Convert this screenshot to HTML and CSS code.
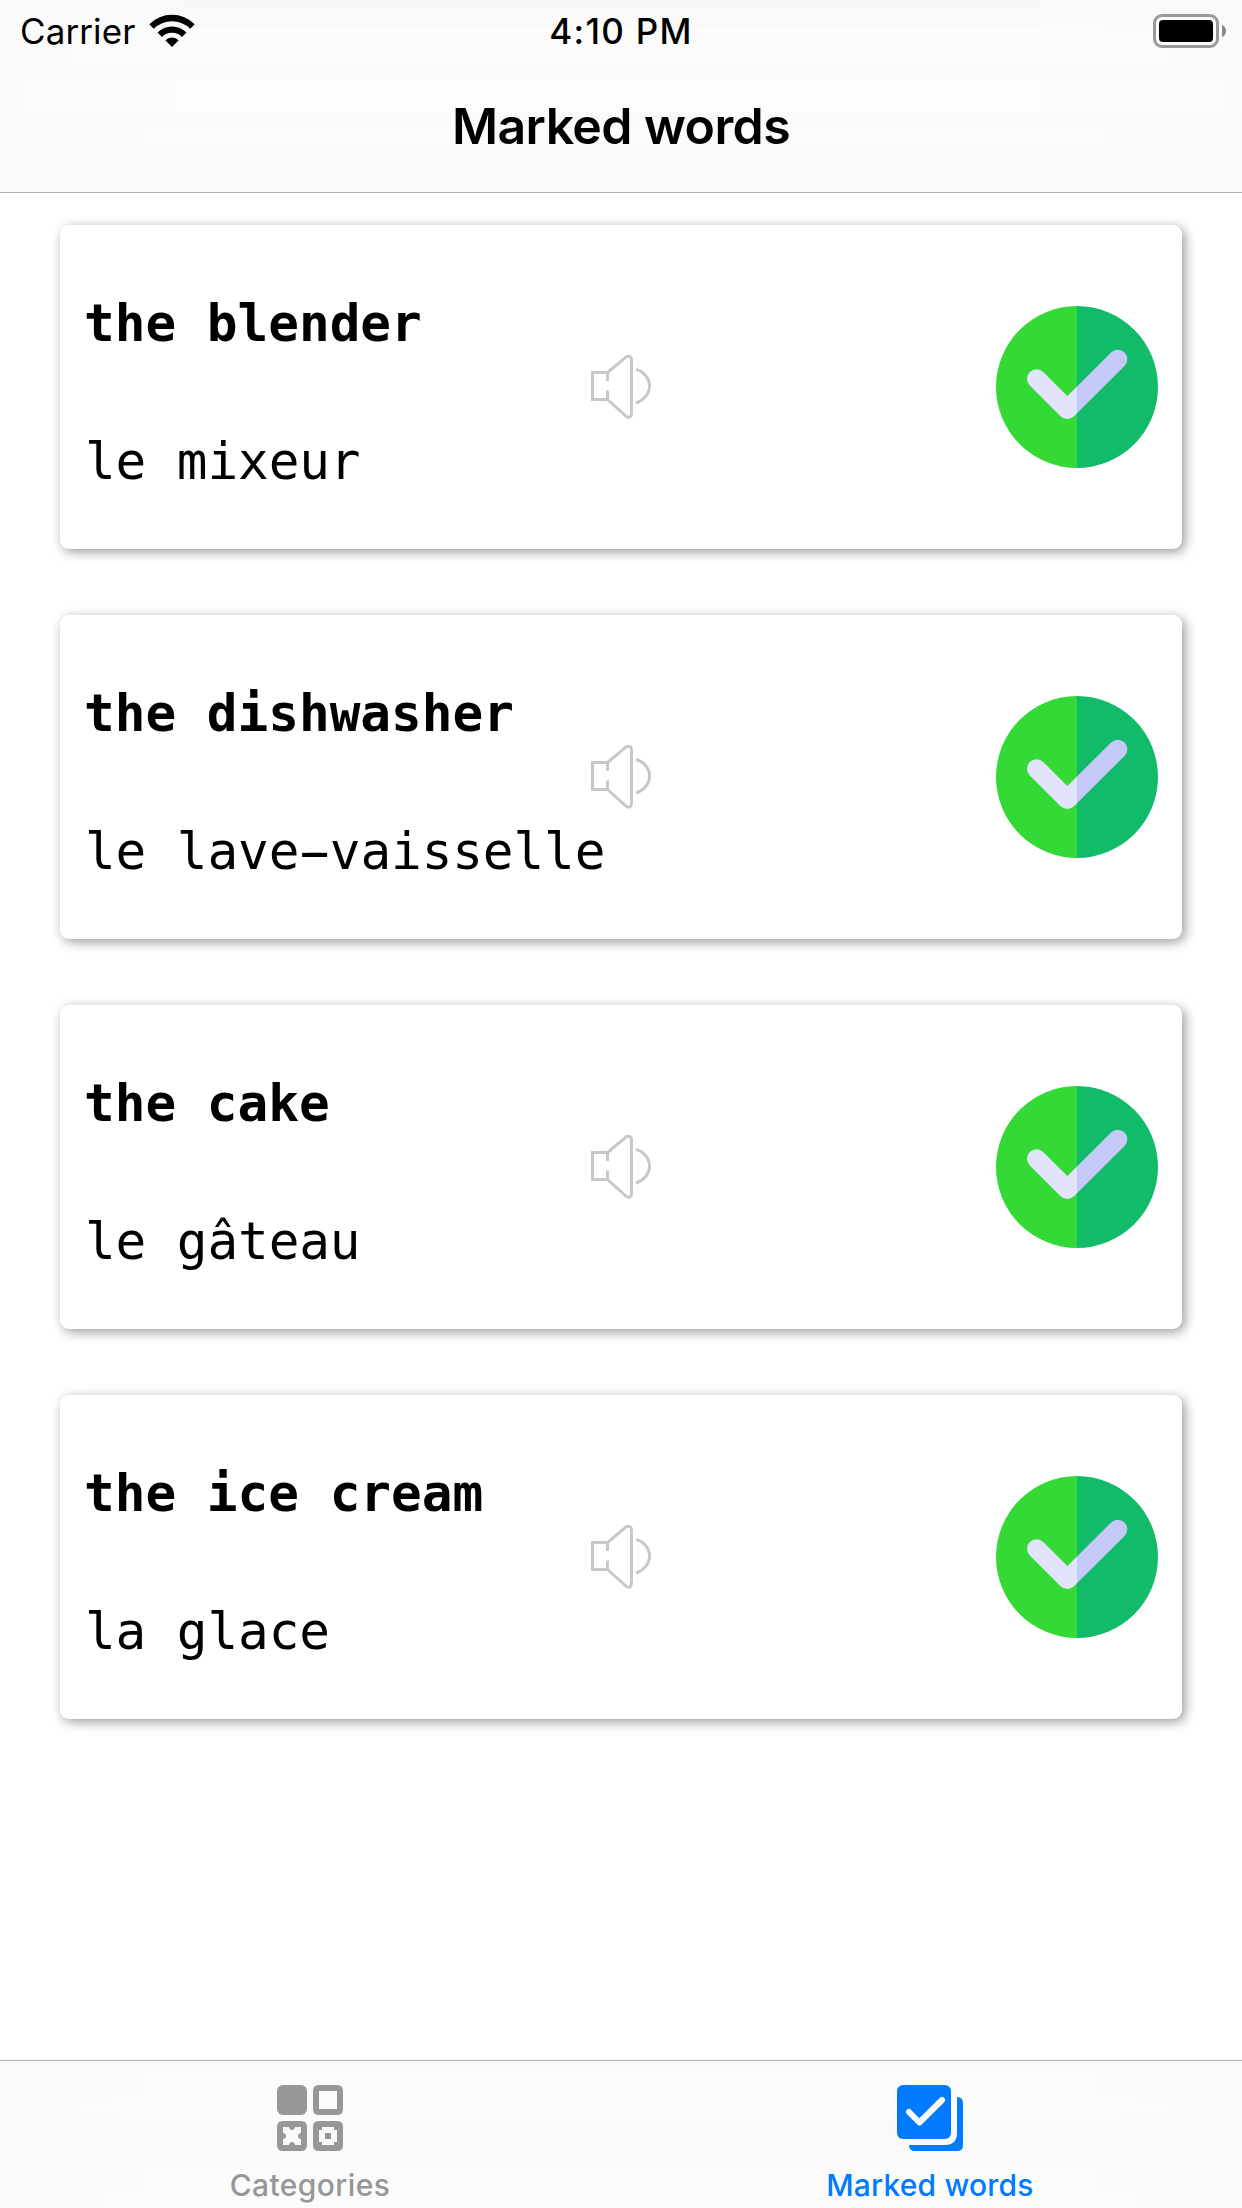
FILE: index.html
```html
<!DOCTYPE html>
<html lang="en">
<head>
<meta charset="utf-8">
<title>Marked words</title>
<link rel="stylesheet" href="styles.css">
</head>
<body>
<svg class="defs" aria-hidden="true">
  <symbol id="speaker" viewBox="0 0 62 66">
    <path d="M17.5 27v-8.500H2.500v27H17.500v-9M17.500 18.500L36.500 2.700Q41.500 1 41.500 6V59Q41.500 65 36.500 62.500L17.500 45.500M46 15.500C54 17.500 59.500 24.500 59.500 32S54 46.500 46 49" fill="none" stroke="#c8c8c8" stroke-width="3"/>
  </symbol>
  <symbol id="done" viewBox="0 0 162 162">
    <path d="M81 0A81 81 0 0 0 81 162Z" fill="#34d936"/>
    <path d="M81 0A81 81 0 0 1 81 162Z" fill="#11bb69"/>
    <svg width="81" height="162"><path class="tick tick-light" d="M40.500 72.700L71.300 103.500 121.800 53.200"/></svg>
    <svg x="81" width="81" height="162"><path class="tick tick-dark" transform="translate(-81 0)" d="M40.500 72.700L71.300 103.500 121.800 53.200"/></svg>
  </symbol>
</svg>
<div class="screen">
  <header class="top">
    <div class="status">
      <div class="carrier">
        <span>Carrier</span>
        <svg class="wifi" viewBox="0 0 46 33">
          <path d="M.3 10.300A32 32 0 0 1 45.700 10.300L41.300 14.700A26 26 0 0 0 4.700 14.700Z"/>
          <path d="M8.500 18.500A20.500 20.500 0 0 1 37.500 18.500L33 23A14 14 0 0 0 13 23Z"/>
          <path d="M16.300 26.300A9.500 9.500 0 0 1 29.700 26.300L23 33Z"/>
        </svg>
      </div>
      <div class="time">4:10 PM</div>
      <svg class="battery" viewBox="0 0 73 34">
        <rect x="1.500" y="1.500" width="63" height="31" rx="7.500" fill="none" stroke="#999" stroke-width="3"/>
        <rect x="6" y="6" width="54" height="22" rx="4"/>
        <path d="M69 11Q73 12.500 73 17T69 23Z" fill="#888"/>
      </svg>
    </div>
    <h1 class="title">Marked words</h1>
  </header>
  <main class="list">
    <article class="card">
      <div class="words"><b>the blender</b><span class="translation">le mixeur</span></div>
      <svg class="speaker"><use href="#speaker"/></svg>
      <svg class="done"><use href="#done"/></svg>
    </article>
    <article class="card">
      <div class="words"><b>the dishwasher</b><span class="translation">le lave<span class="hyphen">-</span>vaisselle</span></div>
      <svg class="speaker"><use href="#speaker"/></svg>
      <svg class="done"><use href="#done"/></svg>
    </article>
    <article class="card">
      <div class="words"><b>the cake</b><span class="translation">le gâteau</span></div>
      <svg class="speaker"><use href="#speaker"/></svg>
      <svg class="done"><use href="#done"/></svg>
    </article>
    <article class="card">
      <div class="words"><b>the ice cream</b><span class="translation">la glace</span></div>
      <svg class="speaker"><use href="#speaker"/></svg>
      <svg class="done"><use href="#done"/></svg>
    </article>
  </main>
  <nav class="tabs">
    <a class="tab">
      <svg class="tab-icon" viewBox="0 0 66 66" fill="currentColor" fill-rule="evenodd">
        <rect width="30" height="30" rx="6"/>
        <path d="M42 0H60Q66 0 66 6V24Q66 30 60 30H42Q36 30 36 24V6Q36 0 42 0ZM42 6V24H60V6Z"/>
        <path d="M6 36H24Q30 36 30 42V60Q30 66 24 66H6Q0 66 0 60V42Q0 36 6 36ZM6 42V48Q9 48.500 9 51T6 54V60H12Q12.500 57 15 57T18 60H24V54Q21 53.500 21 51T24 48V42H18Q17.500 45 15 45T12 42Z"/>
        <path d="M42 36H60Q66 36 66 42V60Q66 66 60 66H42Q36 66 36 60V42Q36 36 42 36ZM45 42V45H42V57H45V60H57V57H60V45H57V42ZM48 48H54V54H48Z"/>
      </svg>
      <span class="label-categories">Categories</span>
    </a>
    <a class="tab active">
      <svg class="tab-icon" viewBox="0 0 66 66" fill="currentColor">
        <rect width="54" height="54" rx="6"/>
        <path d="M60 12Q66 12 66 18V60Q66 66 60 66H18Q12 66 12 60H48Q60 60 60 48Z"/>
        <path d="M12 27L22.400 37.500 45 15" fill="none" stroke="#fafafa" stroke-width="6" stroke-linecap="round" stroke-linejoin="round"/>
      </svg>
      <span class="label-marked">Marked words</span>
    </a>
  </nav>
</div>
</body>
</html>
```
FILE: styles.css
```css
* { box-sizing: border-box; }
body { margin: 0; background: #fff; color: #000; font-family: Inter, "Liberation Sans", sans-serif; }
.defs { position: absolute; width: 0; height: 0; }
.screen { width: 1242px; height: 2208px; display: flex; flex-direction: column; }

.top {
  height: 193px;
  border-bottom: 1px solid #b0b0b0;
  background:
    linear-gradient(90deg, #f9f9f9b0, #fafafa90 12%, #fafafa00 15%, #fafafa00 83%, #fafafa90 88%, #f9f9f9b0),
    linear-gradient(#f8f8f8 15px, #fafafa 15px 28px, #fcfcfc 28px 64px, #fafafa 64px 80px, #fdfdfd 80px 112px, #fafafa 112px 128px, #fbfbfb 128px 146px, #fafafa 146px 178px, #f9f9f9 178px);
}
.status {
  height: 60px;
  padding: 0 16px;
  display: grid;
  grid-template-columns: 1fr auto 1fr;
  align-items: center;
  font-size: 35px;
  line-height: 62px;
}
.carrier { padding-left: 4px; display: flex; align-items: center; gap: 14px; letter-spacing: .1px; }
.wifi { width: 46px; height: 33px; margin-bottom: 2px; }
.time { font-weight: 500; letter-spacing: 1.3px; }
.battery { width: 73px; height: 34px; justify-self: end; }
.title {
  margin: 0;
  text-align: center;
  font-size: 50px;
  line-height: 132px;
  font-weight: 600;
  letter-spacing: -.6px;
}

.list { flex: 1; padding: 32px 60px 0; display: flex; flex-direction: column; gap: 66px; }
.card {
  height: 324px;
  padding: 0 24px;
  border-radius: 9px;
  background: #fff;
  box-shadow: 3px 3px 12px rgba(0, 0, 0, .4);
  display: grid;
  grid-template-columns: minmax(0, 1fr) auto minmax(0, 1fr);
  align-items: center;
}
.words {
  padding-top: 12px;
  display: flex;
  flex-direction: column;
  gap: 78px;
  font: 51px/60px "DejaVu Sans Mono", monospace;
  white-space: nowrap;
}
.translation { padding-left: 1px; letter-spacing: -.1px; }
.hyphen { text-shadow: -6px 0 #000, 6px 0 #000; }
.speaker { width: 62px; height: 66px; }
.done { width: 162px; height: 162px; justify-self: end; }
.tick { fill: none; stroke-width: 19px; stroke-linecap: round; stroke-linejoin: round; }
.tick-light { stroke: #e2e4fb; }
.tick-dark { stroke: #c5c9f7; }

.tabs {
  height: 148px;
  padding-right: 2px;
  border-top: 1px solid #b0b0b0;
  display: grid;
  grid-template-columns: 1fr 1fr;
  background:
    linear-gradient(90deg, #f8f8f8b0, #fafafa90 12%, #fafafa00 15%, #fafafa00 83%, #fafafa90 88%, #f8f8f8b0),
    linear-gradient(#fafafa 0, #fbfbfb 35px, #fdfdfd 50px, #f9f9f9 65px, #fafafa 100px, #fcfcfc 147px);
}
.tab {
  padding-top: 24px;
  display: flex;
  flex-direction: column;
  align-items: center;
  color: #979797;
  font-size: 30px;
  line-height: 36px;
  font-weight: 500;
}
.tab.active { color: #007aff; }
.tab-icon { width: 66px; height: 66px; margin-bottom: 16px; }
.label-categories { letter-spacing: .4px; }
.label-marked { letter-spacing: .2px; }
```
